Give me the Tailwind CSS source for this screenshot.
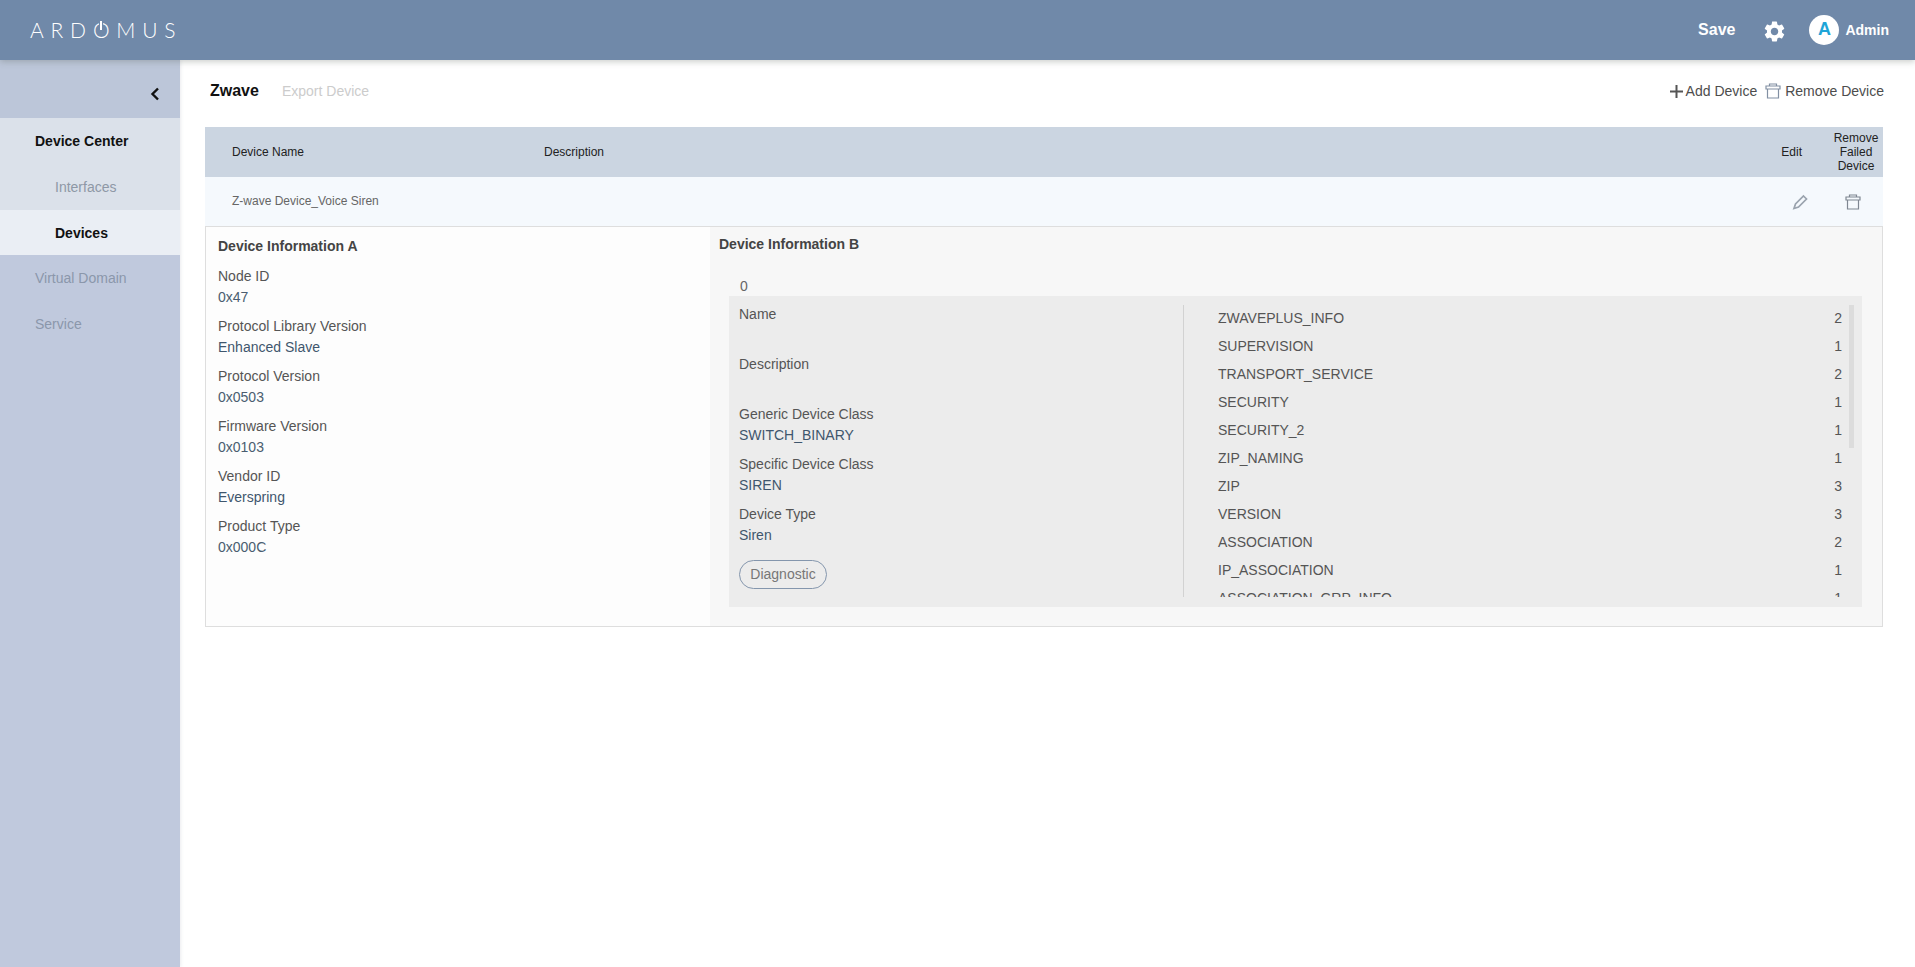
<!DOCTYPE html>
<html lang="en">
<head>
<meta charset="utf-8">
<title>Ardomus</title>
<script src="https://cdn.jsdelivr.net/npm/@tailwindcss/browser@4"></script>
</head>
<body class="h-[967px] w-[1915px] overflow-hidden bg-white font-['Liberation_Sans',Arial,sans-serif] text-sm text-[#555]">
<header class="relative z-10 flex h-[60px] items-center justify-between bg-[#7089a9] pl-[30px] pr-[26px] text-white shadow-[0_2px_6px_rgba(90,100,90,0.3)]">
  <div class="relative mb-[2px] flex font-['Lato',sans-serif] text-[21px] font-light leading-none tracking-[6.8px] text-white">
    <span>ARD</span><span class="relative">O<span class="absolute left-[6.500px] top-[2px] box-content h-[9px] w-[2px] border-x border-[#7089a9] bg-white"></span></span><span>MUS</span>
  </div>
  <div class="flex items-center">
    <button class="text-[16px] font-bold">Save</button>
    <svg class="ml-[27px] mt-[3px] h-[25px] w-[25px]" viewBox="0 0 24 24" fill="#fff"><path d="M19.14 12.94c.04-.3.06-.61.06-.94 0-.32-.02-.64-.07-.94l2.03-1.58a.49.49 0 0 0 .12-.61l-1.92-3.32a.488.488 0 0 0-.59-.22l-2.39.96c-.5-.38-1.03-.7-1.62-.94l-.36-2.54a.484.484 0 0 0-.48-.41h-3.84c-.24 0-.43.17-.47.41l-.36 2.54c-.59.24-1.13.57-1.62.94l-2.39-.96c-.22-.08-.47 0-.59.22L2.74 8.87c-.12.21-.08.47.12.61l2.03 1.58c-.05.3-.09.63-.09.94s.02.64.07.94l-2.03 1.58a.49.49 0 0 0-.12.61l1.92 3.32c.12.22.37.29.59.22l2.39-.96c.5.38 1.03.7 1.62.94l.36 2.54c.05.24.24.41.48.41h3.84c.24 0 .44-.17.47-.41l.36-2.54c.59-.24 1.13-.56 1.62-.94l2.39.96c.22.08.47 0 .59-.22l1.92-3.32c.12-.22.07-.47-.12-.61l-2.01-1.58zM12 15.6c-1.98 0-3.6-1.62-3.6-3.6s1.62-3.6 3.6-3.6 3.6 1.62 3.6 3.6-1.62 3.6-3.6 3.6z"/></svg>
    <div class="ml-[22px] flex h-[30px] w-[30px] items-center justify-center rounded-full bg-white text-[18px] font-bold text-[#1ea5d8]">A</div>
    <span class="ml-[6px] text-[14px] font-bold">Admin</span>
  </div>
</header>
<div class="flex h-[907px]">
  <aside class="flex w-[180px] shrink-0 flex-col bg-[#c0c9dd] shadow-[1px_0_3px_rgba(120,130,150,0.15)]">
    <div class="flex h-[58px] items-center justify-end bg-[#bcc6d9] pr-[20px] pt-[10px]">
      <svg class="h-[14px] w-[10px]" viewBox="0 0 10 14" fill="none" stroke="#111" stroke-width="2.4"><path d="M8 1.5 2.5 7 8 12.5"/></svg>
    </div>
    <div class="bg-[#dbe1ea]">
      <div class="flex h-[46px] items-center pl-[35px] text-[14px] font-bold text-[#111]">Device Center</div>
      <div class="flex h-[46px] items-center pl-[55px] text-[#8e98a6]">Interfaces</div>
      <div class="flex h-[45px] items-center bg-[#eaeef4] pl-[55px] font-bold text-[#111]">Devices</div>
    </div>
    <div class="flex h-[46px] items-center pl-[35px] text-[#8b97ab]">Virtual Domain</div>
    <div class="flex h-[46px] items-center pl-[35px] text-[#8b97ab]">Service</div>
  </aside>
  <main class="flex-1 pl-[25px] pr-[32px]">
    <div class="flex h-[67px] items-center justify-between pb-[5px]">
      <div class="flex items-center pl-[5px]">
        <span class="text-[16px] font-bold text-[#111]">Zwave</span>
        <span class="ml-[23px] text-[#ccc]">Export Device</span>
      </div>
      <div class="-mr-px flex items-center text-[#4d4d4d]">
        <svg class="mr-[3px] h-[13px] w-[13px]" viewBox="0 0 13 13" stroke="#555" stroke-width="2" fill="none"><path d="M6.500 0v13M0 6.500h13"/></svg>
        <span>Add Device</span>
        <svg class="ml-[8px] mr-[4px] h-[16px] w-[16px]" viewBox="0 0 16 16" fill="none" stroke="#8290a3" stroke-width="1.2"><path d="M4.500 3V1h7v2M1 3h14v3H1zM2.500 6v9h11V6"/></svg>
        <span>Remove Device</span>
      </div>
    </div>
    <div class="flex h-[50px] items-center bg-[#cbd5e1] text-xs text-[#222]">
      <span class="ml-[27px] w-[312px]">Device Name</span>
      <span class="flex-1">Description</span>
      <span class="mr-[29px]">Edit</span>
      <span class="mr-[2px] w-[50px] text-center leading-[14px]">Remove Failed Device</span>
    </div>
    <div class="flex h-[49px] items-center bg-[#f5f9fd] text-xs text-[#666]">
      <span class="ml-[27px] flex-1 pb-px">Z-wave Device_Voice Siren</span>
      <svg class="mr-[37px] h-[16px] w-[16px]" viewBox="0 0 16 16" fill="none" stroke="#9aa3ae" stroke-width="1.7"><path d="M11.500 2 14.500 5 6.500 13 2 14.500 3.500 10z"/></svg>
      <svg class="mr-[22px] h-[16px] w-[16px]" viewBox="0 0 16 16" fill="none" stroke="#7f8792" stroke-width="1.2"><path d="M4.500 3V1h7v2M1 3h14v3H1zM2.500 6v9h11V6"/></svg>
    </div>
    <section class="flex h-[401px] border border-[#dedede]">
      <div class="w-[504px] shrink-0 bg-[#fdfdfd] pl-[12px] pt-[9px]">
        <h3 class="mb-[10px] text-sm font-bold leading-5 text-[#444]">Device Information A</h3>
        <dl class="leading-[21px]">
          <div class="mb-[8px]"><dt>Node ID</dt><dd class="text-[#4a5d70]">0x47</dd></div>
          <div class="mb-[8px]"><dt>Protocol Library Version</dt><dd class="text-[#3f566d]">Enhanced Slave</dd></div>
          <div class="mb-[8px]"><dt>Protocol Version</dt><dd class="text-[#4a5d70]">0x0503</dd></div>
          <div class="mb-[8px]"><dt>Firmware Version</dt><dd class="text-[#4a5d70]">0x0103</dd></div>
          <div class="mb-[8px]"><dt>Vendor ID</dt><dd class="text-[#3f566d]">Everspring</dd></div>
          <div class="mb-[8px]"><dt>Product Type</dt><dd class="text-[#4a5d70]">0x000C</dd></div>
        </dl>
      </div>
      <div class="flex-1 bg-[#f7f7f7] pl-[9px] pr-[20px] pt-[7px]">
        <h3 class="text-sm font-bold leading-5 text-[#444]">Device Information B</h3>
        <div class="ml-[21px] mt-[22px] leading-[20px] text-[#666]">0</div>
        <div class="relative ml-[10px] flex h-[311px] bg-[#ececec]">
          <dl class="w-[454px] shrink-0 pl-[10px] pt-[8px] leading-[21px]">
            <div class="mb-[8px] h-[42px]"><dt>Name</dt></div>
            <div class="mb-[8px] h-[42px]"><dt>Description</dt></div>
            <div class="mb-[8px]"><dt>Generic Device Class</dt><dd class="text-[#3f566d]">SWITCH_BINARY</dd></div>
            <div class="mb-[8px]"><dt>Specific Device Class</dt><dd class="text-[#3f566d]">SIREN</dd></div>
            <div class="mb-[8px]"><dt>Device Type</dt><dd class="text-[#3f566d]">Siren</dd></div>
            <button class="mt-[6px] h-[29px] w-[88px] rounded-full border border-[#8496ad] text-center text-[#777]">Diagnostic</button>
          </dl>
          <div class="my-[9px] h-[292px] flex-1 overflow-hidden border-l border-[#d2d2d2] pl-[34px] pr-[20px]">
            <ul class="-mt-px text-[#555]">
              <li class="flex h-[28px] items-center justify-between"><span>ZWAVEPLUS_INFO</span><span>2</span></li>
              <li class="flex h-[28px] items-center justify-between"><span>SUPERVISION</span><span>1</span></li>
              <li class="flex h-[28px] items-center justify-between"><span>TRANSPORT_SERVICE</span><span>2</span></li>
              <li class="flex h-[28px] items-center justify-between"><span>SECURITY</span><span>1</span></li>
              <li class="flex h-[28px] items-center justify-between"><span>SECURITY_2</span><span>1</span></li>
              <li class="flex h-[28px] items-center justify-between"><span>ZIP_NAMING</span><span>1</span></li>
              <li class="flex h-[28px] items-center justify-between"><span>ZIP</span><span>3</span></li>
              <li class="flex h-[28px] items-center justify-between"><span>VERSION</span><span>3</span></li>
              <li class="flex h-[28px] items-center justify-between"><span>ASSOCIATION</span><span>2</span></li>
              <li class="flex h-[28px] items-center justify-between"><span>IP_ASSOCIATION</span><span>1</span></li>
              <li class="flex h-[28px] items-center justify-between"><span>ASSOCIATION_GRP_INFO</span><span>1</span></li>
            </ul>
          </div>
          <div class="absolute right-[8px] top-[9px] h-[143px] w-[5px] bg-[#dcdcdc]"></div>
        </div>
      </div>
    </section>
  </main>
</div>
</body>
</html>
